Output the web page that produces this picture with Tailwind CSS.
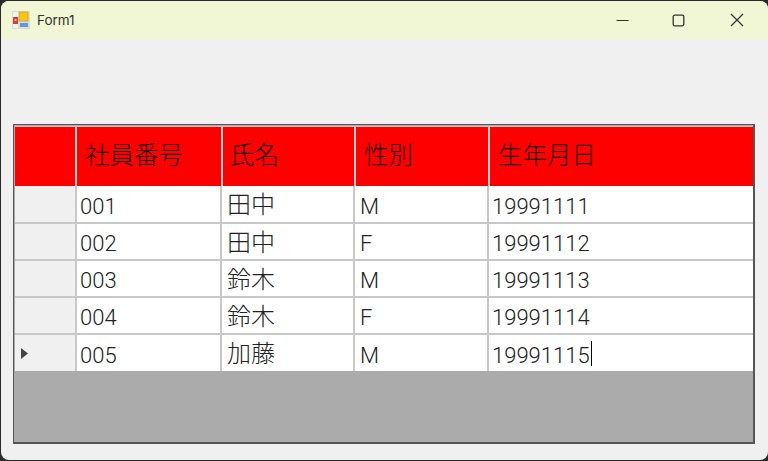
<!DOCTYPE html>
<html lang="ja">
<head>
<meta charset="UTF-8">
<title>Form1</title>
<script src="https://cdn.jsdelivr.net/npm/@tailwindcss/browser@4"></script>
</head>
<body class="bg-[#2a2a2a] w-[768px] h-[461px] overflow-hidden font-['Roboto','Noto_Sans_CJK_JP',sans-serif]">
<div class="w-[767px] h-[459px] mt-px ml-px rounded-[8px] overflow-hidden bg-[#f0f0f0] flex flex-col">
  <!-- title bar -->
  <div class="h-[38px] shrink-0 bg-[#f1f6d4] flex items-center pl-[11px]">
    <svg width="18" height="18" viewBox="0 0 18 18">
      <rect x="0" y="0" width="18" height="18" fill="#dcdcd4"/>
      <rect x="1" y="1" width="6" height="5" fill="#f2f2ee"/>
      <rect x="1" y="6" width="5" height="7" fill="#c8423c"/>
      <rect x="2.5" y="8" width="2" height="2" fill="#eeb0a8"/>
      <rect x="1" y="13" width="5" height="4" fill="#f2f2ee"/>
      <rect x="7" y="1" width="9" height="9" fill="#f5c518" stroke="#c99a20" stroke-width="0.7"/>
      <rect x="8" y="12" width="8" height="4" fill="#5b9be0"/>
    </svg>
    <span class="ml-[7px] text-[13.5px] text-[#333] font-['Inter',sans-serif]">Form1</span>
    <div class="ml-auto flex items-center">
      <svg class="mr-[43px]" width="13" height="13" viewBox="0 0 13 13"><path d="M0.5 6.5H12.5" stroke="#333" stroke-width="1.2"/></svg>
      <svg class="mr-[45px]" width="13" height="13" viewBox="0 0 13 13"><rect x="1.2" y="1.2" width="10.6" height="10.6" rx="1.5" fill="none" stroke="#333" stroke-width="1.3"/></svg>
      <svg class="mr-[24px]" width="14" height="14" viewBox="0 0 14 14"><path d="M1 1L13 13M13 1L1 13" stroke="#333" stroke-width="1.2"/></svg>
    </div>
  </div>
  <!-- grid -->
  <div class="mt-[85px] ml-3 w-[742px] h-[320px] border border-[#555] border-b-2 border-r-2 bg-[#ababab] pt-px pl-px flex flex-col">
    <div class="flex h-[60px] border-t border-[#c8c8c8] text-[24.5px] text-[#200] font-['Noto_Sans_CJK_JP',sans-serif] font-light">
      <div class="w-[62px] bg-[#ff0000] border-r-2 border-[#cfcfcf]"></div>
      <div class="w-[146px] bg-[#ff0000] border-r-2 border-[#cfcfcf] pl-2 pb-[5px] flex items-center">社員番号</div>
      <div class="w-[133px] bg-[#ff0000] border-r-2 border-[#cfcfcf] pl-[7px] pb-[5px] flex items-center">氏名</div>
      <div class="w-[134px] bg-[#ff0000] border-r-2 border-[#cfcfcf] pl-[8px] pb-[5px] flex items-center">性別</div>
      <div class="flex-1 bg-[#ff0000] pl-[8px] pb-[5px] flex items-center">生年月日</div>
    </div>
    <div class="flex h-[38px] bg-white text-[22px] font-light text-[#222] border-b-2 border-[#c8c8c8] items-stretch">
      <div class="w-[62px] bg-[#f0f0f0] border-r-2 border-[#c8c8c8]"></div>
      <div class="w-[145px] border-r-2 border-[#c8c8c8] pl-[3px] pt-[4px] flex items-center">001</div>
      <div class="w-[133px] border-r-2 border-[#c8c8c8] pl-[5px] pb-[2px] flex items-center font-['Noto_Sans_CJK_JP',sans-serif] text-[24px]">田中</div>
      <div class="w-[134px] border-r-2 border-[#c8c8c8] pl-[5px] pt-[4px] flex items-center">M</div>
      <div class="flex-1 pl-[3px] pt-[4px] flex items-center">19991111</div>
    </div>
    <div class="flex h-[37px] bg-white text-[22px] font-light text-[#222] border-b-2 border-[#c8c8c8] items-stretch">
      <div class="w-[62px] bg-[#f0f0f0] border-r-2 border-[#c8c8c8]"></div>
      <div class="w-[145px] border-r-2 border-[#c8c8c8] pl-[3px] pt-[4px] flex items-center">002</div>
      <div class="w-[133px] border-r-2 border-[#c8c8c8] pl-[5px] pb-[2px] flex items-center font-['Noto_Sans_CJK_JP',sans-serif] text-[24px]">田中</div>
      <div class="w-[134px] border-r-2 border-[#c8c8c8] pl-[5px] pt-[4px] flex items-center">F</div>
      <div class="flex-1 pl-[3px] pt-[4px] flex items-center">19991112</div>
    </div>
    <div class="flex h-[37px] bg-white text-[22px] font-light text-[#222] border-b-2 border-[#c8c8c8] items-stretch">
      <div class="w-[62px] bg-[#f0f0f0] border-r-2 border-[#c8c8c8]"></div>
      <div class="w-[145px] border-r-2 border-[#c8c8c8] pl-[3px] pt-[4px] flex items-center">003</div>
      <div class="w-[133px] border-r-2 border-[#c8c8c8] pl-[5px] pb-[2px] flex items-center font-['Noto_Sans_CJK_JP',sans-serif] text-[24px]">鈴木</div>
      <div class="w-[134px] border-r-2 border-[#c8c8c8] pl-[5px] pt-[4px] flex items-center">M</div>
      <div class="flex-1 pl-[3px] pt-[4px] flex items-center">19991113</div>
    </div>
    <div class="flex h-[37px] bg-white text-[22px] font-light text-[#222] border-b-2 border-[#c8c8c8] items-stretch">
      <div class="w-[62px] bg-[#f0f0f0] border-r-2 border-[#c8c8c8]"></div>
      <div class="w-[145px] border-r-2 border-[#c8c8c8] pl-[3px] pt-[4px] flex items-center">004</div>
      <div class="w-[133px] border-r-2 border-[#c8c8c8] pl-[5px] pb-[2px] flex items-center font-['Noto_Sans_CJK_JP',sans-serif] text-[24px]">鈴木</div>
      <div class="w-[134px] border-r-2 border-[#c8c8c8] pl-[5px] pt-[4px] flex items-center">F</div>
      <div class="flex-1 pl-[3px] pt-[4px] flex items-center">19991114</div>
    </div>
    <div class="flex h-[36px] bg-white text-[22px] font-light text-[#222] items-stretch">
      <div class="w-[62px] bg-[#f0f0f0] border-r-2 border-[#c8c8c8] flex items-center pl-[6px]">
        <svg width="7" height="11" viewBox="0 0 7 11"><path d="M0 0L7 5.5L0 11Z" fill="#444"/></svg>
      </div>
      <div class="w-[145px] border-r-2 border-[#c8c8c8] pl-[3px] pt-[4px] flex items-center">005</div>
      <div class="w-[133px] border-r-2 border-[#c8c8c8] pl-[5px] pb-[2px] flex items-center font-['Noto_Sans_CJK_JP',sans-serif] text-[24px]">加藤</div>
      <div class="w-[134px] border-r-2 border-[#c8c8c8] pl-[5px] pt-[4px] flex items-center">M</div>
      <div class="flex-1 pl-[3px] flex items-center"><span class="pt-[4px]">19991115</span><span class="inline-block w-px h-[25px] ml-px bg-black"></span></div>
    </div>
  </div>
</div>
</body>
</html>
